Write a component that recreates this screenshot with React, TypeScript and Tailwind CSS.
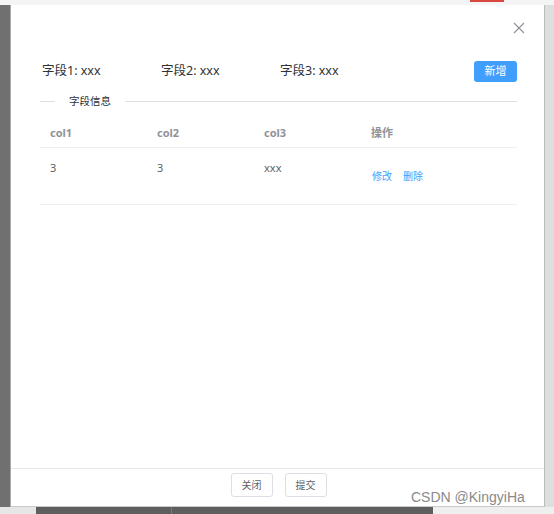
import React from 'react';

const font = { fontFamily: '"Noto Sans", "Noto Sans CJK SC", sans-serif' };

interface Row {
  col1: string;
  col2: string;
  col3: string;
}

const rows: Row[] = [{ col1: '3', col2: '3', col3: 'xxx' }];

function CloseIcon() {
  return (
    <svg width="12" height="12" viewBox="0 0 12 12" fill="none">
      <path d="M1 1L11 11M11 1L1 11" stroke="#909399" strokeWidth="1.2" />
    </svg>
  );
}

export default function App() {
  return (
    <div className="relative flex h-[514px] w-[554px] flex-col overflow-hidden bg-[#6b6b6b]" style={font}>
      {/* 顶部条 */}
      <div className="flex h-[5px] shrink-0 bg-[#f4f4f4]">
        <div className="w-[470px]" />
        <div className="h-[2px] w-[34px] bg-[#d9473f]" />
      </div>

      <div className="flex min-h-0 flex-1">
        <div className="w-[11px] shrink-0 border-r border-[#a9a9a9] bg-[#707070]" />

        {/* 弹窗 */}
        <div className="flex w-[533px] flex-col border-b border-[#c9c9c9] bg-white">
          <div className="flex h-[45px] items-start justify-end pr-[19px] pt-[17px]">
            <CloseIcon />
          </div>

          <div className="flex flex-1 flex-col pl-[29px] pr-[27px]">
            {/* 字段行 */}
            <div className="flex h-[42px] items-center pl-[2px] text-[12.5px] text-[#303133]">
              <span className="w-[119px]">字段1: xxx</span>
              <span className="w-[119px]">字段2: xxx</span>
              <span className="w-[119px]">字段3: xxx</span>
              <button className="ml-auto h-[21px] w-[43px] rounded-[3px] bg-[#409eff] text-[11px] text-white">
                新增
              </button>
            </div>

            {/* 分割线 */}
            <div className="mt-[3px] flex h-[12px] items-center">
              <div className="h-px w-[15px] bg-[#dcdfe6]" />
              <span className="px-[14px] text-[10.5px] leading-none text-[#303133]">字段信息</span>
              <div className="h-px flex-1 bg-[#dcdfe6]" />
            </div>

            {/* 表格 */}
            <div className="mt-[13px] text-[11px]">
              <div className="flex h-[28px] items-center border-b border-[#ebeef5] font-bold text-[#909399]">
                <div className="w-[107px] pl-[10px]">col1</div>
                <div className="w-[107px] pl-[10px]">col2</div>
                <div className="w-[107px] pl-[10px]">col3</div>
                <div className="flex-1 pl-[10px]">操作</div>
              </div>
              {rows.map((r, i) => (
                <div key={i} className="flex h-[57px] border-b border-[#ebeef5] text-[#606266]">
                  <div className="w-[107px] pl-[10px] pt-[12px]">{r.col1}</div>
                  <div className="w-[107px] pl-[10px] pt-[12px]">{r.col2}</div>
                  <div className="w-[107px] pl-[10px] pt-[12px]">{r.col3}</div>
                  <div className="flex flex-1 gap-[11px] pl-[11px] pt-[21px] text-[10px] text-[#409eff]">
                    <span>修改</span>
                    <span>删除</span>
                  </div>
                </div>
              ))}
            </div>
          </div>

          {/* 底部 */}
          <div className="flex h-[38px] items-start justify-center gap-[12px] border-t border-[#e4e7ed] pt-[4px] pl-[2px]">
            <button className="h-[24px] w-[42px] rounded-[3px] border border-[#dcdfe6] text-[10px] text-[#606266]">
              关闭
            </button>
            <button className="h-[24px] w-[42px] rounded-[3px] border border-[#dcdfe6] text-[10px] text-[#606266]">
              提交
            </button>
          </div>
        </div>

        <div className="flex-1 border-l border-[#bdbdbd] bg-[#dedede]" />
      </div>

      <div className="flex h-[7px] shrink-0">
        <div className="w-[36px] bg-[#e6e6e6]" />
        <div className="w-[136px] border-r border-[#777] bg-[#5e5e5e]" />
        <div className="w-[261px] bg-[#5e5e5e]" />
        <div className="flex-1 bg-[#efefef]" />
      </div>

      <div className="pointer-events-none absolute left-[411px] top-[487px] text-[14px] text-[#8a8a8a]" style={{ fontFamily: '"Liberation Sans", sans-serif' }}>
        CSDN @KingyiHa
      </div>
    </div>
  );
}
